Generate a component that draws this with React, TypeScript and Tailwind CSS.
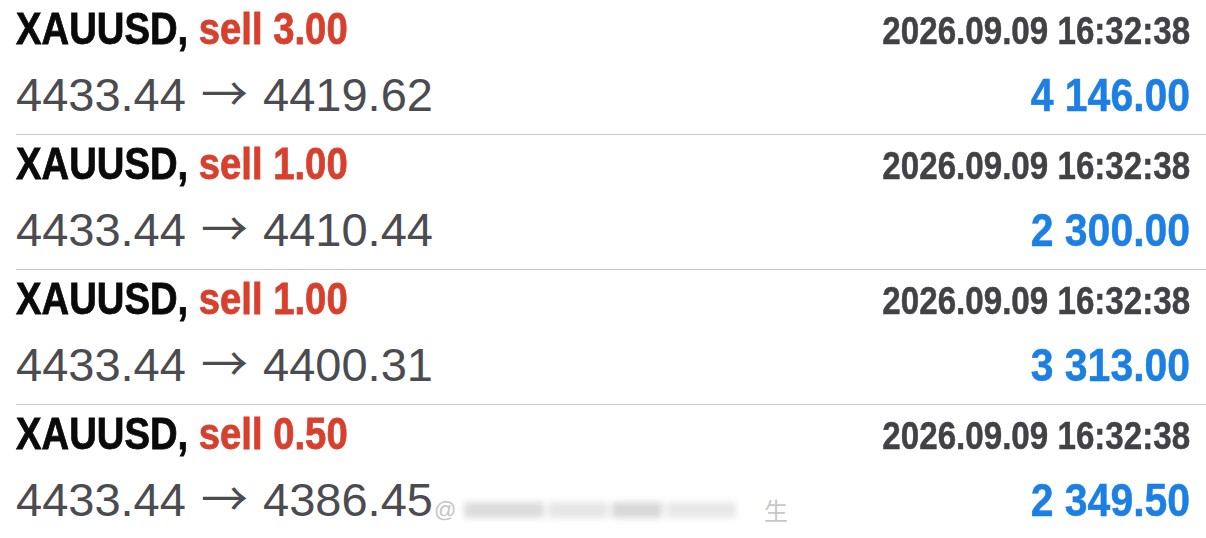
const trades = [
  { lots: "3.00", from: "4433.44", to: "4419.62", time: "2026.09.09 16:32:38", profit: "4 146.00" },
  { lots: "1.00", from: "4433.44", to: "4410.44", time: "2026.09.09 16:32:38", profit: "2 300.00" },
  { lots: "1.00", from: "4433.44", to: "4400.31", time: "2026.09.09 16:32:38", profit: "3 313.00" },
  { lots: "0.50", from: "4433.44", to: "4386.45", time: "2026.09.09 16:32:38", profit: "2 349.50" },
];

function TradeRow({ t, last }: { t: (typeof trades)[number]; last: boolean }) {
  return (
    <div className={`ml-4 pr-4 pt-[6px] pb-[16px] ${last ? "" : "border-b border-[#c9c9cc]"}`}>
      <div className="flex justify-between items-baseline h-[45px]">
        <span className="inline-block origin-left scale-x-[0.85] whitespace-nowrap text-[45px] leading-[45px] font-bold [-webkit-text-stroke:0.8px]">
          <span className="text-[#0a0a0a]">XAUUSD, </span>
          <span className="text-[#d8402e]">sell {t.lots}</span>
        </span>
        <span className="inline-block origin-right scale-x-[0.85] whitespace-nowrap text-[39px] leading-[45px] font-bold text-[#414146] [-webkit-text-stroke:0.5px]">
          {t.time}
        </span>
      </div>
      <div className="flex justify-between items-baseline h-[46px] mt-[21px]">
        <span className="whitespace-nowrap text-[47px] leading-[46px] text-[#4b4b50]">
          {t.from}{" "}
          <span className="leading-[0] mx-[2px]" style={{ fontFamily: '"Noto Sans CJK SC", sans-serif' }}>→</span>{" "}
          {t.to}
        </span>
        <span className="inline-block origin-right scale-x-[0.89] whitespace-nowrap text-[46px] leading-[46px] font-bold text-[#1b7fe3] [-webkit-text-stroke:0.5px]">
          {t.profit}
        </span>
      </div>
    </div>
  );
}

export default function App() {
  return (
    <div className="relative w-[1206px] h-[538px] overflow-hidden bg-white" style={{ fontFamily: '"Liberation Sans", Arial, sans-serif' }}>
      {trades.map((t, i) => (
        <TradeRow key={i} t={t} last={i === trades.length - 1} />
      ))}
      {/* watermark */}
      <div className="absolute left-[434px] top-[490px] w-[370px] h-[40px] flex items-center">
        <div className="absolute left-0 top-0 w-[340px] h-[40px] bg-white/90 blur-[2px]" />
        <span className="relative text-[22px] text-[#c4c4c4] leading-none">@</span>
        <div className="relative ml-2 flex-1 h-[16px] flex gap-1 blur-[3px]">
          <div className="w-[80px] bg-[#dcdcdc]" />
          <div className="w-[60px] bg-[#e6e6e6]" />
          <div className="w-[50px] bg-[#d8d8d8]" />
          <div className="w-[70px] bg-[#e8e8e8]" />
        </div>
        <span className="relative ml-3 mr-4 text-[24px] text-[#c8c8c8] leading-none" style={{ fontFamily: '"Noto Sans CJK SC", sans-serif' }}>生</span>
      </div>
    </div>
  );
}
